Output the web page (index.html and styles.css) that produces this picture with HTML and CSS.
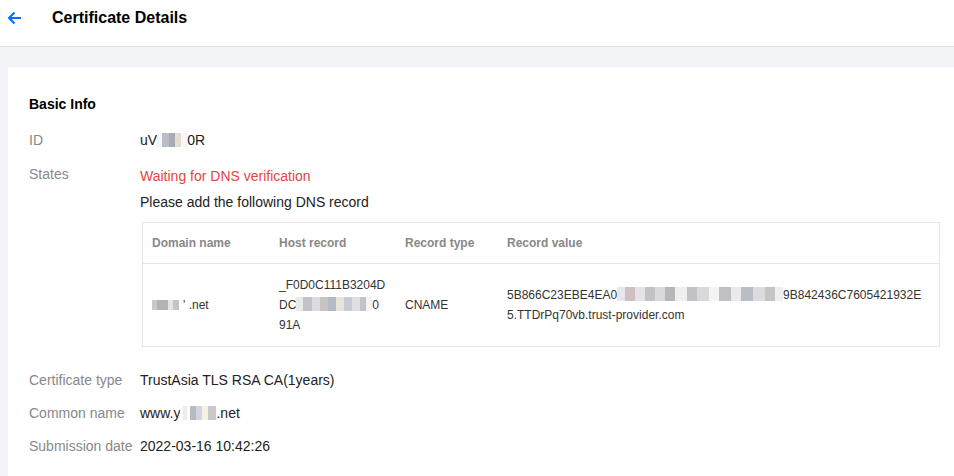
FILE: index.html
```html
<!DOCTYPE html>
<html lang="en">
<head>
    <meta charset="UTF-8">
    <title>Certificate Details</title>
    <link rel="stylesheet" href="styles.css">
</head>
<body>
    <div class="topbar">
        <a class="back" href="#">
            <svg width="16" height="14" viewBox="0 0 16 14"><path d="M14 7H2M7.5 1.5L2 7l5.5 5.5" fill="none" stroke="#006eff" stroke-width="2"/></svg>
        </a>
        <h1>Certificate Details</h1>
    </div>

    <div class="card">
        <h2>Basic Info</h2>
        <div class="info">
            <div class="label">ID</div>
            <div class="value">uV<span class="mask m-id"></span>0R</div>

            <div class="label">States</div>
            <div class="value">
                <div class="status">Waiting for DNS verification</div>
                <div class="hint">Please add the following DNS record</div>
                <table class="dns">
                    <thead>
                        <tr>
                            <th class="c1">Domain name</th>
                            <th class="c2">Host record</th>
                            <th class="c3">Record type</th>
                            <th>Record value</th>
                        </tr>
                    </thead>
                    <tbody>
                        <tr>
                            <td><span class="mask m-dom"></span>' .net</td>
                            <td>_F0D0C111B3204D<br>DC<span class="mask m-host"></span>0<br>91A</td>
                            <td>CNAME</td>
                            <td class="nowrap">5B866C23EBE4EA0<span class="mask m-val"></span>9B842436C7605421932E<br>5.TTDrPq70vb.trust-provider.com</td>
                        </tr>
                    </tbody>
                </table>
            </div>
        </div>
        <div class="info lower">
            <div class="label">Certificate type</div>
            <div class="value">TrustAsia TLS RSA CA(1years)</div>

            <div class="label">Common name</div>
            <div class="value">www.y<span class="mask m-cn"></span>.net</div>

            <div class="label">Submission date</div>
            <div class="value">2022-03-16 10:42:26</div>
        </div>
    </div>
</body>
</html>
```

FILE: styles.css
```css
body {
    margin: 0;
    font-family: "Liberation Sans", Arial, sans-serif;
    font-size: 14px;
    color: #000;
    background-color: #f2f3f7;
    overflow: hidden;
}
.topbar {
    height: 36px;
    padding: 0 0 10px 7px;
    background-color: #fff;
    border-bottom: 1px solid #dfe0e3;
    display: flex;
    align-items: center;
}
.back {
    display: flex;
    margin-right: 29px;
}
.topbar h1 {
    margin: 0;
    font-size: 16px;
    font-weight: bold;
    color: #000;
    margin-top: -1px;
}
.card {
    background-color: #fff;
    margin: 20px 0 0 8px;
    padding: 27px 14px 20px 21px;
    min-height: 360px;
}
.card h2 {
    margin: 0 0 16px;
    font-size: 14px;
    line-height: 20px;
    font-weight: bold;
}
.info {
    display: grid;
    grid-template-columns: 111px 1fr;
    row-gap: 14px;
    line-height: 20px;
}
.info.lower {
    margin-top: 23px;
    row-gap: 13px;
}
.label {
    color: #888;
}
.value {
    color: #222;
}
.status {
    color: #e54545;
    margin-top: 2px;
}
.hint {
    margin-top: 6px;
    margin-bottom: 10px;
}
.dns {
    width: calc(100% - 2px);
    margin-left: 2px;
    border-collapse: collapse;
    border: 1px solid #e5e5e5;
    font-size: 12px;
}
.dns th {
    text-align: left;
    color: #888;
    font-weight: bold;
    height: 40px;
    padding: 0 9px;
    border-bottom: 1px solid #e5e5e5;
}
.dns th.c1 { width: 109px; }
.dns th.c2 { width: 108px; }
.dns th.c3 { width: 84px; }
.dns td {
    color: #333;
    padding: 11px 9px;
    height: 60px;
    vertical-align: middle;
    line-height: 20px;
}
.dns td.nowrap {
    white-space: nowrap;
    overflow: hidden;
}
.mask {
    display: inline-block;
    height: 14px;
    vertical-align: -2px;
}
.m-id {
    width: 30px;
    background: linear-gradient(90deg, #f3f6fa 0 5px, #b9bcc4 5px 12px, #a9abb3 12px 18px, #e7dcd2 18px 24px, #f8f8f8 24px 30px);
}
.m-dom {
    width: 31px;
    height: 10px;
    vertical-align: -1px;
    background: linear-gradient(90deg, #c9c9c9 0 5px, #b3b3b3 5px 16px, #e4e4e4 16px 21px, #c4c4c4 21px 27px, #fff 27px 31px);
}
.m-host {
    width: 76px;
    background: linear-gradient(90deg, #eaeaea 0 7px, #c1c1c6 7px 16px, #dcdde2 16px 24px, #c8c2c0 24px 32px, #b6b8c3 32px 40px, #e9e3dc 40px 48px, #c7c9d3 48px 56px, #dcdfe6 56px 64px, #c3c3c3 64px 70px, #f3f3f3 70px 76px);
}
.m-val {
    width: 166px;
    background: linear-gradient(90deg, #e6e8ee 0 8px, #cfc0c4 8px 18px, #e3e3e8 18px 28px, #c2c2c6 28px 38px, #d9d9de 38px 48px, #b8b5b9 48px 58px, #efefef 58px 70px, #c2c2c4 70px 80px, #d6dadc 80px 92px, #f3f3f3 92px 102px, #c1bfc4 102px 114px, #eaeaea 114px 124px, #b9bdc6 124px 136px, #dcdcdc 136px 148px, #c5c5c5 148px 158px, #efefef 158px 166px);
}
.m-cn {
    width: 36px;
    background: linear-gradient(90deg, #fff 0 3px, #ececec 3px 7px, #fff 7px 10px, #b9b9c1 10px 16px, #cfd6e0 16px 22px, #f6f1e6 22px 28px, #c9c9c9 28px 36px);
}
```
